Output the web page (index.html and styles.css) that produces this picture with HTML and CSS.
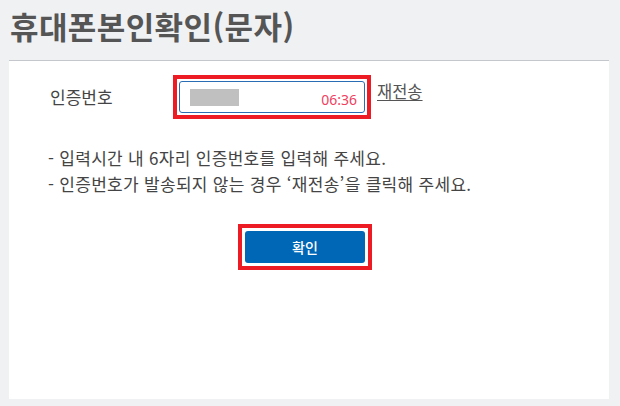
FILE: index.html
```html
<!DOCTYPE html>
<html lang="ko">
<head>
<meta charset="utf-8">
<title>휴대폰본인확인(문자)</title>
<link rel="stylesheet" href="styles.css">
</head>
<body>
<h1 class="title">휴대폰본인확인(문자)</h1>
<div class="panel">
  <div class="row">
    <div class="label">인증번호</div>
    <div class="hl">
      <div class="field">
        <span class="mask"></span>
        <span class="timer">06:36</span>
      </div>
    </div>
    <a class="resend" href="#">재전송</a>
  </div>
  <ul class="notes">
    <li>- 입력시간 내 6자리 인증번호를 입력해 주세요.</li>
    <li>- 인증번호가 발송되지 않는 경우 ‘재전송’을 클릭해 주세요.</li>
  </ul>
  <div class="actions">
    <div class="hl">
      <button class="btn" type="button">확인</button>
    </div>
  </div>
</div>
</body>
</html>
```
FILE: styles.css
```css
* { box-sizing: border-box; }
html, body { margin: 0; padding: 0; }
body {
  background: #f0f1f3;
  font-family: "Noto Sans CJK KR", "Noto Sans", sans-serif;
  color: #444;
  width: 620px;
  height: 406px;
  overflow: hidden;
}
.title {
  margin: 0;
  height: 60px;
  padding: 6px 0 0 10px;
  font-size: 31px;
  line-height: 40px;
  font-weight: 700;
  color: #555;
  letter-spacing: 0.4px;
}
.panel {
  margin: 0 11px 0 9px;
  height: 339px;
  background: #fff;
  border-top: 1px solid #c4c7cb;
  padding: 14px 0 0 0;
}
.row {
  display: flex;
  align-items: flex-start;
  padding-left: 41px;
}
.label {
  width: 123px;
  font-size: 17px;
  line-height: 44px;
  color: #444;
}
.hl {
  border: 4px solid #ed1c24;
  padding: 2px;
  background: #fff;
}
.field {
  width: 186px;
  height: 32px;
  border: 1px solid #2a6db5;
  border-radius: 3px;
  display: flex;
  align-items: center;
  justify-content: space-between;
  padding: 0 7px 0 10px;
}
.mask {
  width: 49px;
  height: 17px;
  background: #c0c0c0;
}
.timer {
  font-family: "Noto Sans", sans-serif;
  font-size: 14px;
  color: #f0405e;
  padding-top: 4px;
}
.resend {
  margin-left: 6px;
  margin-top: 5px;
  font-size: 16.5px;
  line-height: 22px;
  color: #555;
  text-decoration: underline;
  text-underline-offset: 2px;
}
.notes {
  list-style: none;
  margin: 26px 0 0 0;
  padding: 0 0 0 39px;
  font-size: 17px;
  line-height: 26px;
  letter-spacing: 0.3px;
  color: #444;
}
.actions {
  display: flex;
  justify-content: center;
  padding-right: 8px;
  margin-top: 27px;
}
.actions .hl { padding: 3px; }
.btn {
  width: 120px;
  height: 32px;
  border: 0;
  border-radius: 3px;
  background: #0067b6;
  color: #fff;
  font-family: "Noto Sans CJK KR", sans-serif;
  font-size: 14px;
  font-weight: 500;
  display: block;
  padding: 0;
}
```
